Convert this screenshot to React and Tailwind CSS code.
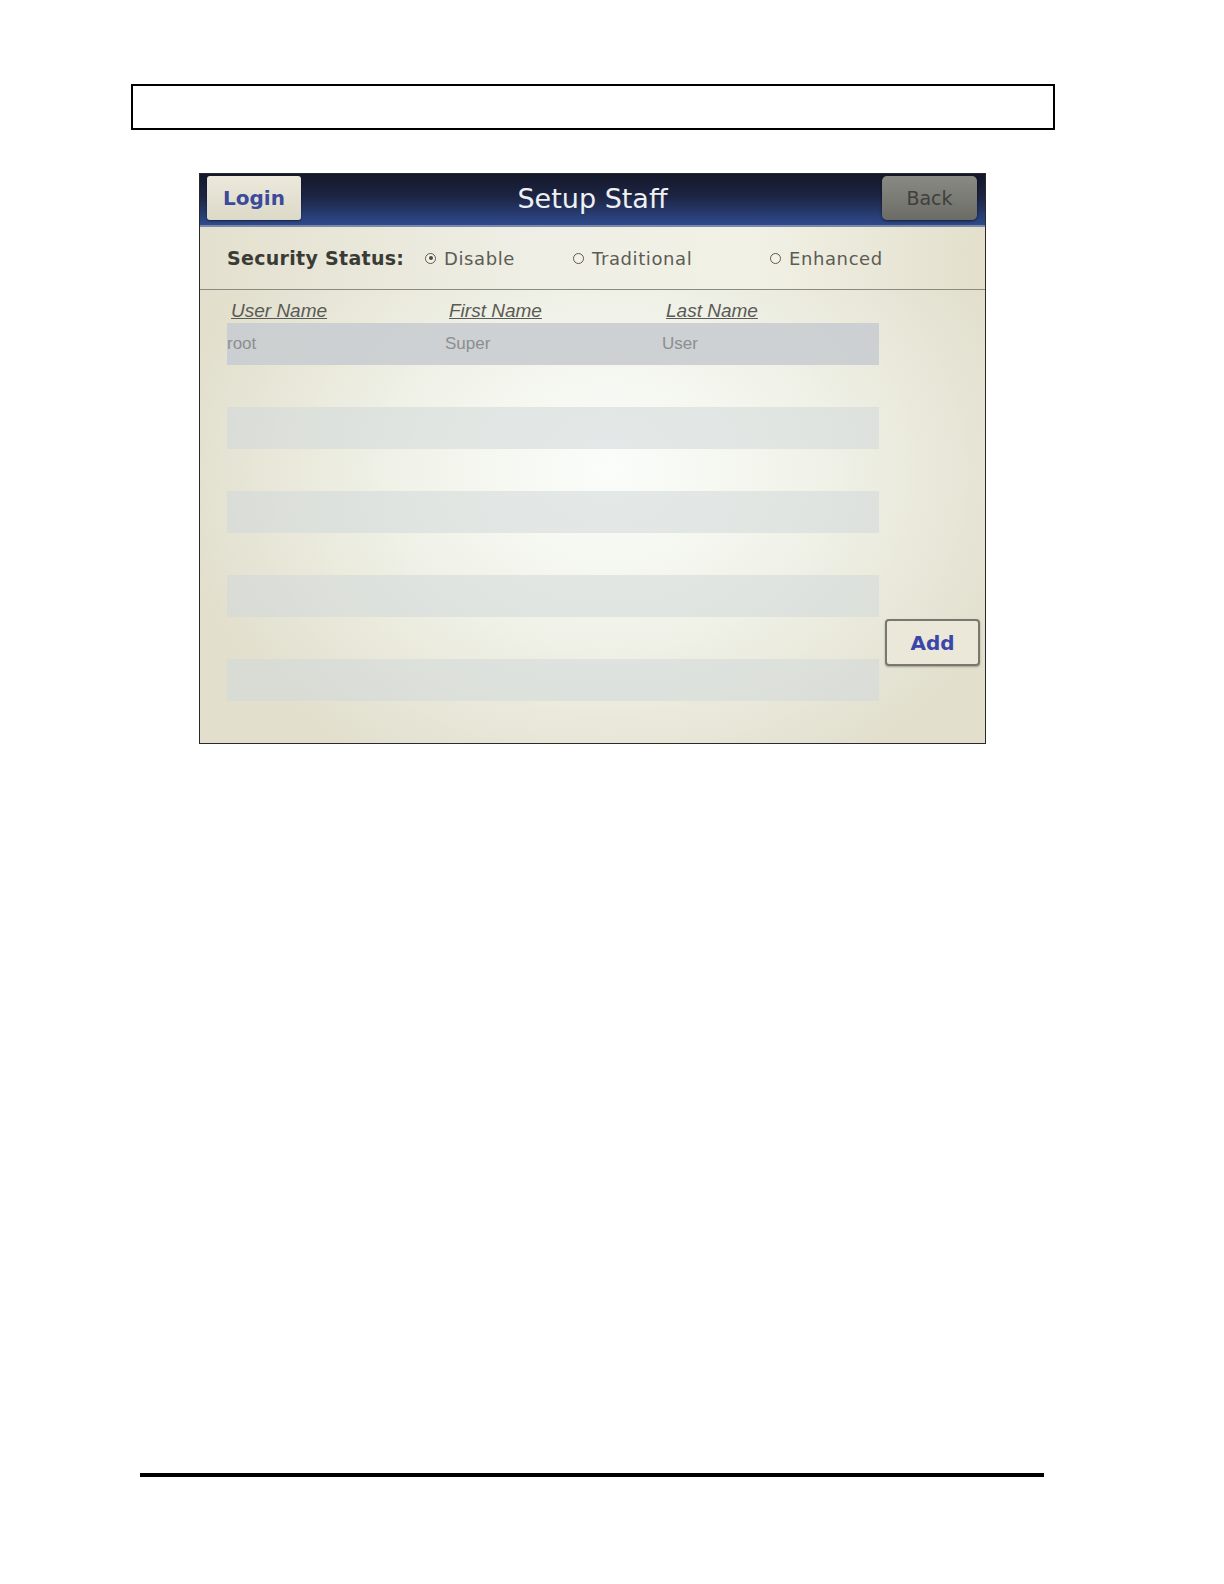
const ROWS = [
  { user: "root", first: "Super", last: "User" },
  null, null, null, null, null, null, null, null, null,
];

function Radio({ checked, label, className = "" }) {
  return (
    <div className={`flex items-center gap-[8px] ${className}`}>
      <span className="relative flex h-[11px] w-[11px] items-center justify-center rounded-full border-[1.5px] border-[#5a5a52] bg-[#f4f2e6]">
        {checked && <span className="h-[4px] w-[4px] rounded-full bg-[#4a4a44]" />}
      </span>
      <span className="text-[18px] tracking-[0.6px] text-[#5c5c55]">{label}</span>
    </div>
  );
}

export default function App() {
  return (
    <div className="flex h-[1584px] w-full flex-col overflow-hidden bg-white pt-[84px] font-['DejaVu_Sans',sans-serif]">
      {/* page header box */}
      <div className="ml-[131px] h-[46px] w-[924px] shrink-0 border-2 border-black" />

      {/* photographed screen */}
      <div className="ml-[199px] mt-[43px] flex h-[571px] w-[787px] shrink-0 flex-col overflow-hidden border border-[#2a2a2a] bg-[radial-gradient(ellipse_55%_60%_at_52%_52%,#fbfdfb_0%,#f1f3ea_45%,#e2dfcd_100%)]">
        {/* title bar */}
        <div className="relative flex h-[51px] shrink-0 items-center justify-center bg-[linear-gradient(180deg,#15182a_0%,#1d2544_45%,#2e4a8c_100%)]">
          <div className="absolute left-[7px] top-[2px] flex h-[44px] w-[94px] items-center justify-center rounded-[3px] bg-[linear-gradient(180deg,#ece9dc_0%,#ddd9c8_100%)] shadow-[0_1px_2px_rgba(0,0,0,0.5)]">
            <span className="text-[20px] font-bold text-[#3b4a9a]">Login</span>
          </div>
          <span className="text-[27px] text-[#eef0f4]">Setup Staff</span>
          <div className="absolute right-[8px] top-[2px] flex h-[44px] w-[95px] items-center justify-center rounded-[5px] bg-[linear-gradient(180deg,#8a8a84_0%,#6c6c66_100%)] shadow-[0_1px_3px_rgba(0,0,0,0.6)]">
            <span className="text-[19px] text-[#3f3f3c]">Back</span>
          </div>
        </div>
        <div className="h-[2px] shrink-0 bg-[#7c88a8]" />

        {/* security status */}
        <div className="flex h-[63px] shrink-0 items-center border-b border-[#8c8a80] bg-[linear-gradient(90deg,#e4e0cf_0%,#eeeee4_40%,#f1f1e6_70%,#e3dfcc_100%)] pl-[27px]">
          <span className="w-[198px] text-[19px] font-bold tracking-[0.3px] text-[#3b3b36]">Security Status:</span>
          <Radio checked label="Disable" className="w-[148px]" />
          <Radio label="Traditional" className="w-[197px]" />
          <Radio label="Enhanced" />
        </div>

        {/* table */}
        <div className="flex flex-1">
          <div className="ml-[27px] flex w-[652px] flex-col pt-[9px]">
            <div className="flex h-[24px] items-center font-['Liberation_Sans',sans-serif] text-[19px] italic text-[#5a5a55] underline">
              <span className="w-[218px] pl-[4px]">User Name</span>
              <span className="w-[217px] pl-[4px]">First Name</span>
              <span className="pl-[4px]">Last Name</span>
            </div>
            {ROWS.map((r, i) => (
              <div
                key={i}
                className={`flex h-[42px] items-center font-['Liberation_Sans',sans-serif] text-[17px] text-[#8c8e90] ${
                  i === 0 ? "bg-[#c9cdd0]/90" : i % 2 === 0 ? "bg-[#d2d8da]/55" : "bg-transparent"
                }`}
              >
                {r && (
                  <>
                    <span className="w-[218px]">{r.user}</span>
                    <span className="w-[217px]">{r.first}</span>
                    <span>{r.last}</span>
                  </>
                )}
              </div>
            ))}
          </div>
          <div className="flex flex-1 flex-col items-end pr-[5px] pt-[329px]">
            <div className="flex h-[47px] w-[95px] items-center justify-center rounded-[4px] border-2 border-[#7a786e] bg-[#ebe8da] shadow-[0_1px_2px_rgba(0,0,0,0.3)]">
              <span className="text-[20px] font-bold text-[#3a46a8]">Add</span>
            </div>
          </div>
        </div>
      </div>

      {/* footer rule */}
      <div className="ml-[140px] mt-[729px] h-[4px] w-[904px] shrink-0 bg-black" />
    </div>
  );
}
